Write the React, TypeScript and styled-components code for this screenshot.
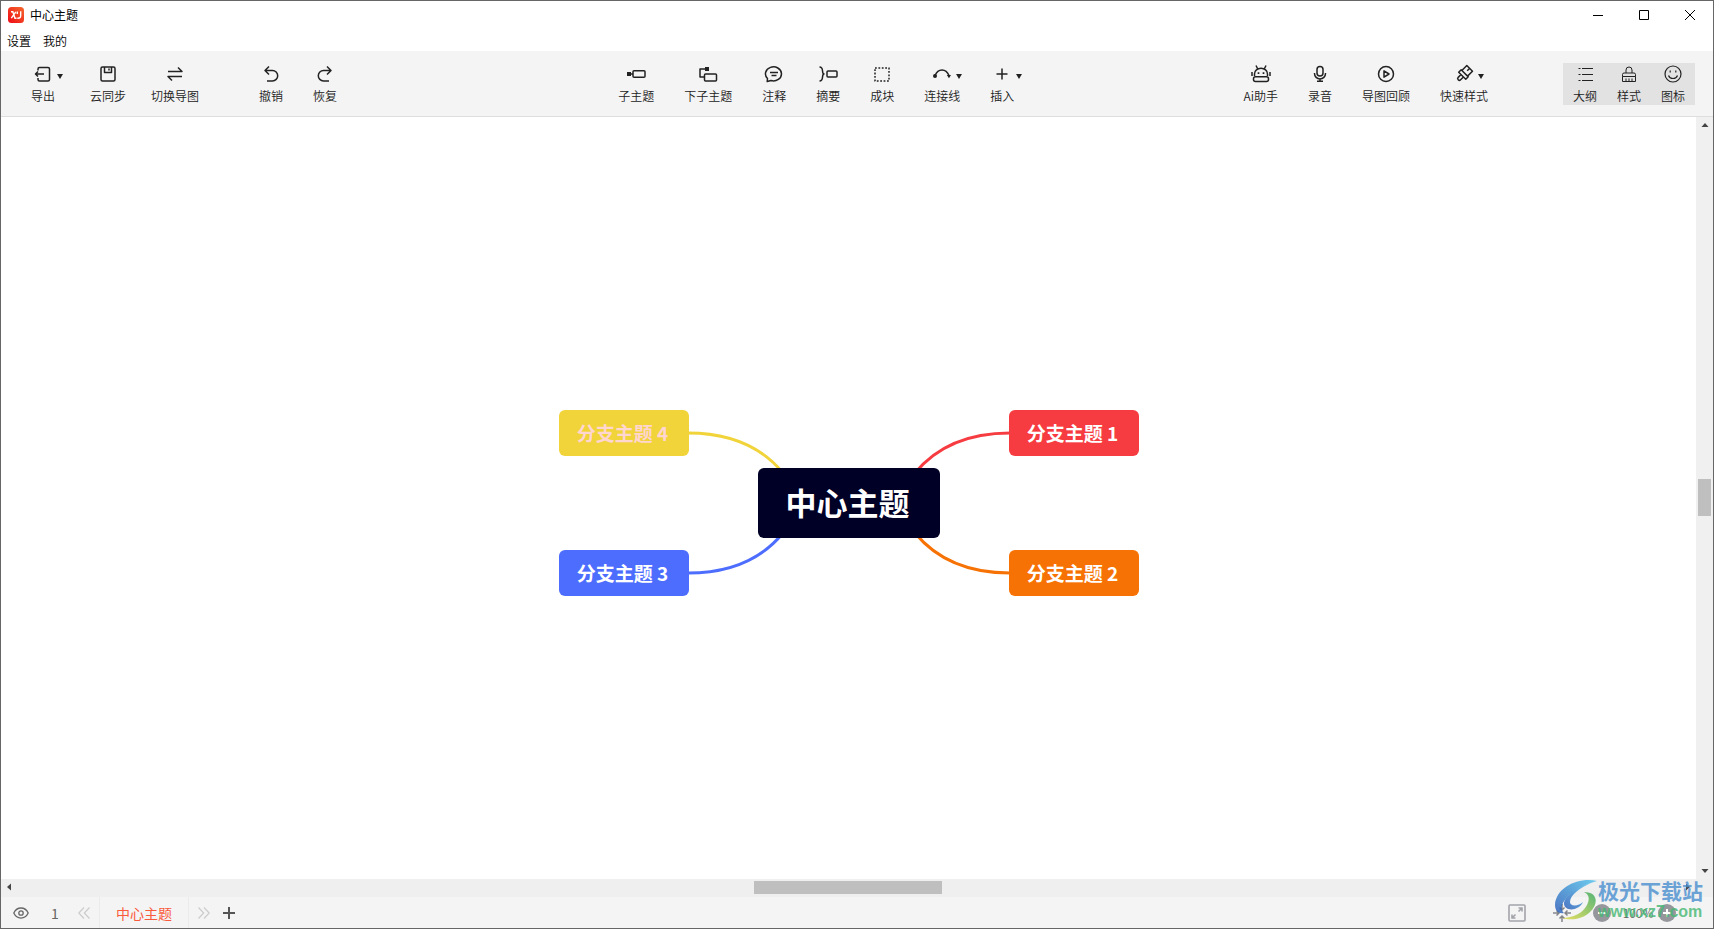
import React from "react";
import styled, { createGlobalStyle } from "styled-components";

const Global = createGlobalStyle`
  * { box-sizing: border-box; }
  body { margin: 0; background: #fff; }
  body, button { font-family: "Noto Sans CJK SC", sans-serif; }
  button { border: 0; padding: 0; margin: 0; background: none; color: inherit; }
`;

const Window = styled.div`
  min-height: 100vh;
  display: flex;
  flex-direction: column;
  border: 1px solid #666;
  color: #333;
  font-size: 12px;
  line-height: 18px;
`;

const TitleBar = styled.header`
  display: flex;
  align-items: center;
  justify-content: space-between;
  height: 28px;
  padding-left: 7px;
`;

const AppTitle = styled.h1`
  display: flex;
  align-items: center;
  gap: 6px;
  margin: 0;
  color: #000;
  font-size: 12px;
  font-weight: 400;
`;

const WindowControls = styled.div`
  display: flex;
`;

const WindowButton = styled.button`
  display: flex;
  align-items: center;
  justify-content: center;
  width: 46px;
  height: 28px;
`;

const MenuBar = styled.nav`
  display: flex;
  gap: 12px;
  height: 22px;
  padding: 3px 6px 1px;
`;

const MenuButton = styled.button`
  font-size: 12px;
  font-weight: 350;
  line-height: 18px;
  color: #000;
`;

const ToolBar = styled.div`
  display: flex;
  justify-content: space-between;
  align-items: center;
  height: 66px;
  padding: 0 18px 0 30px;
  background: #f4f4f4;
  border-bottom: 1px solid #dedede;
`;

const ToolGroup = styled.div<{ $reserve?: boolean }>`
  display: flex;
  gap: 30px;
  min-width: ${(p) => (p.$reserve ? "358px" : "0")};
`;

const ToolCluster = styled.div<{ $gap: number }>`
  display: flex;
  gap: ${(p) => p.$gap}px;
`;

const ToolButton = styled.button`
  display: flex;
  flex-direction: column;
  align-items: center;
  height: 42px;
  padding: 1px 0 0;
  font-size: 12px;
  font-weight: 350;
  line-height: 18px;
  color: #222;
  white-space: nowrap;
`;

const IconBox = styled.span`
  position: relative;
  display: block;
  height: 23px;
  svg { display: block; }
`;

const Caret = styled.span`
  position: absolute;
  left: 24px;
  top: 10px;
  border: 3px solid transparent;
  border-top: 5px solid #222;
  border-bottom: 0;
`;

const PanelSwitch = styled.div`
  display: flex;
  margin-left: 45px;
  background: #e2e2e2;
`;

const PanelButton = styled(ToolButton)`
  width: 44px;
`;

const Workspace = styled.main`
  flex: 1;
  display: grid;
  grid-template-columns: 1fr 17px;
  grid-template-rows: 1fr 18px;
  background: #efefef;
`;

const Canvas = styled.section`
  display: flex;
  align-items: center;
  justify-content: center;
  padding-top: 10px;
  background: #fff;
  overflow: hidden;
`;

const Stage = styled.div`
  position: relative;
  width: 580px;
  height: 186px;
`;

const Links = styled.svg`
  position: absolute;
  inset: 0;
`;

const Topic = styled.div<{ $x: number; $y: number; $bg: string; $ink?: string }>`
  position: absolute;
  left: ${(p) => p.$x}px;
  top: ${(p) => p.$y}px;
  width: 130px;
  height: 46px;
  padding-right: 2px;
  border-radius: 6px;
  background: ${(p) => p.$bg};
  color: ${(p) => p.$ink ?? "#fff"};
  font-size: 19px;
  font-weight: 700;
  line-height: 46px;
  text-align: center;
  white-space: nowrap;
`;

const CentralTopic = styled(Topic)`
  width: 182px;
  height: 70px;
  font-size: 31px;
  line-height: 68px;
`;

const VerticalBar = styled.div`
  display: flex;
  flex-direction: column;
  align-items: center;
  background: #f0f0f0;
`;

const HorizontalBar = styled.div`
  display: flex;
  align-items: center;
  padding-bottom: 2px;
  background: #efefef;
`;

const ScrollButton = styled.button`
  display: flex;
  align-items: center;
  justify-content: center;
  width: 16px;
  height: 16px;
`;

const Track = styled.div<{ $vertical?: boolean }>`
  flex: 1;
  display: flex;
  flex-direction: ${(p) => (p.$vertical ? "column" : "row")};
  justify-content: center;
  align-items: center;
  padding: ${(p) => (p.$vertical ? "0 0 2px" : "0 2px 0 0")};
`;

const Thumb = styled.div<{ $vertical?: boolean }>`
  width: ${(p) => (p.$vertical ? "13px" : "188px")};
  height: ${(p) => (p.$vertical ? "37px" : "13px")};
  background: #bfbfbf;
`;

const StatusBar = styled.footer`
  position: relative;
  display: flex;
  justify-content: space-between;
  height: 31px;
  background: #f4f4f4;
  color: #666;
`;

const StatusGroup = styled.div<{ $end?: boolean }>`
  display: flex;
  align-items: center;
  padding-right: ${(p) => (p.$end ? "36px" : "0")};
`;

const StatusButton = styled.button<{ $w: number }>`
  display: flex;
  align-items: center;
  justify-content: center;
  width: ${(p) => p.$w}px;
  height: 31px;
`;

const PageCount = styled.span`
  width: 28px;
  text-align: center;
  font-size: 14px;
`;

const SheetTab = styled.button`
  height: 31px;
  padding: 0 16px;
  border-left: 1px solid #ebebeb;
  border-right: 1px solid #ebebeb;
  color: #fa5a3c;
  font-size: 14px;
  line-height: 30px;
`;

const Zoom = styled.span`
  width: 38px;
  text-align: center;
  font-size: 12px;
  font-weight: 350;
`;

const Watermark = styled.div`
  position: absolute;
  right: 10px;
  bottom: 6px;
  display: flex;
  align-items: center;
  opacity: 0.8;
  pointer-events: none;
`;

const WatermarkText = styled.div`
  display: flex;
  flex-direction: column;
  font-size: 21px;
  font-weight: 700;
  line-height: 24px;
  color: #4a90d0;
`;

const WatermarkSite = styled.span`
  font-family: "Liberation Sans", sans-serif;
  font-size: 16px;
  font-weight: 700;
  line-height: 20px;
  color: #45b872;
`;

const icons: Record<string, React.ReactNode> = {
  export: <><path d="M5 6.5V5A1.5 1.5 0 0 1 6.500 3.500H15A1.500 1.500 0 0 1 16.500 5V15.500A1.500 1.500 0 0 1 15 17H6.500A1.500 1.500 0 0 1 5 15.500V14" /><path d="M2.500 10H11M5 7.500 2.500 10l2.500 2.500" /></>,
  save: <><rect x="3" y="3" width="14" height="14" rx="1.500" /><path d="M6.500 3v5.500h7V3M11 4.500v2" /></>,
  swap: <path d="M3 7.500h14l-4-4M17 12.500H3l4 4" />,
  undo: <path d="M8 2.500 4 6.500l4 4M4 6.500h7.500a5.200 5.200 0 0 1 0 10.400H6" />,
  redo: <path d="m12 2.500 4 4-4 4M16 6.500H8.500a5.200 5.200 0 0 0 0 10.400H14" />,
  child: <><path d="M4 10h3" /><rect x="1" y="8" width="4" height="4" fill="currentColor" stroke="none" /><rect x="7" y="6.700" width="12" height="6.600" rx="1" /></>,
  sub: <><path d="M9 5H2v8H6" /><rect x="7" y="3" width="4" height="4" fill="currentColor" stroke="none" /><rect x="6.500" y="10" width="12" height="7" rx="1" fill="#f4f4f4" /></>,
  note: <><path d="M3.500 14.500A8 7 0 1 1 7 16.500L3.200 17.500z" /><path d="M6 8.400h8M7.500 11.500h5" /></>,
  summary: <><path d="M1.500 3c5 0 1.500 6.500 4.500 7-3 .5.5 7-4.500 7" /><rect x="9" y="7" width="10" height="6" rx="1" /></>,
  block: <path d="M3 4h14v13H3z" strokeDasharray="1.800 1.600" />,
  link: <><path d="M3 11.500C6 4 14 4 17 11.500" /><circle cx="3" cy="12" r="2" fill="currentColor" stroke="none" /><path d="M14.800 11h4.200l-2 3.200z" fill="currentColor" stroke="none" /></>,
  plus: <path d="M10 4.500v11M4.500 10h11" />,
  robot: <><path d="M3.500 12V10a6.500 5.800 0 0 1 13 0v2M5 1.500l1.500 3M15 1.500l-1.500 3M1 8v4M19 8v4" /><rect x="2.500" y="12.800" width="15" height="4.700" rx="2" /><path d="M7.500 8.200v1.800M12.500 8.200v1.800" strokeWidth="1.700" /></>,
  mic: <><rect x="7" y="2.500" width="6" height="9.500" rx="3" /><path d="M4.500 9v.5a5.500 5.500 0 0 0 11 0V9M10 15v2.500M7 17.300h6" /></>,
  play: <><circle cx="10" cy="10" r="7.500" /><path d="M8 6.800v6.400l5-3.200z" /></>,
  brush: <g transform="rotate(45 10 10)"><path d="M7 2h7v7H6V2zM5 9h10v3.500H5zM8.300 12.500v4a1.700 1.700 0 0 0 3.400 0v-4M10 2.500v3" /></g>,
  list: <g strokeWidth="1"><path d="M7 4.500h11M7 10.500h11M7 16.500h11M3.500 4.500h2M3.500 10.500h2M3.500 16.500h2" /></g>,
  broom: <g strokeWidth="1"><path d="M7 9V6a3 3 0 0 1 6 0v3M3.500 12.500V10.500A1.500 1.500 0 0 1 5 9h10a1.500 1.500 0 0 1 1.500 1.500v2zM3.500 12.500v5h13v-5M7 14.500v3M10 14.500v3M13 14.500v3" /></g>,
  smile: <g strokeWidth="1.200"><circle cx="10" cy="10" r="8" /><path d="M5.500 11.500c1.500 4 7.500 4 9 0M7.200 6.500v2M12.800 6.500v2" /></g>,
};

const Icon = ({ name }: { name: string }) => (
  <svg width="20" height="20" viewBox="0 0 20 20" fill="none" stroke="currentColor" strokeWidth="1.500" strokeLinejoin="round" aria-hidden="true">
    {icons[name]}
  </svg>
);

const Tool = ({ icon, label, menu }: { icon: string; label: string; menu?: boolean }) => (
  <ToolButton type="button">
    <IconBox><Icon name={icon} />{menu && <Caret />}</IconBox>
    {label}
  </ToolButton>
);

const Arrow = ({ turn }: { turn: number }) => (
  <svg width="8" height="8" viewBox="0 0 8 8" aria-hidden="true">
    <path d="M.5 6 4 2l3.500 4z" fill="#444" transform={`rotate(${turn} 4 4)`} />
  </svg>
);

const glyph = { fill: "none", stroke: "currentColor", "aria-hidden": true } as const;

export default function App() {
  return (
    <Window>
      <Global />
      <TitleBar>
        <AppTitle>
          <svg width="16" height="16" viewBox="0 0 16 16" aria-hidden="true">
            <defs><linearGradient id="brand" x1="1" y1="0" x2="0" y2="1"><stop offset="0" stopColor="#f4682c" /><stop offset="1" stopColor="#f00a16" /></linearGradient></defs>
            <rect width="16" height="16" rx="3.500" fill="url(#brand)" />
            <path d="M3 4.800h1.800L7 11.200H8.500M7.800 4.800 3.300 11.200M9.300 4.500v2.500M9.300 11.200c3 .2 3.400-1 3.400-3V4.200" fill="none" stroke="#fff" strokeWidth="1.400" />
          </svg>
          中心主题
        </AppTitle>
        <WindowControls>
          <WindowButton type="button" aria-label="最小化"><svg width="10" height="10" {...glyph} stroke="#000"><path d="M0 5.500h10" /></svg></WindowButton>
          <WindowButton type="button" aria-label="最大化"><svg width="10" height="10" {...glyph} stroke="#000"><path d="M.5.500h9v9h-9z" /></svg></WindowButton>
          <WindowButton type="button" aria-label="关闭"><svg width="10" height="10" {...glyph} stroke="#000"><path d="m0 0 10 10M10 0 0 10" /></svg></WindowButton>
        </WindowControls>
      </TitleBar>
      <MenuBar>
        <MenuButton type="button">设置</MenuButton>
        <MenuButton type="button">我的</MenuButton>
      </MenuBar>
      <ToolBar role="toolbar">
        <ToolGroup $reserve>
          <ToolCluster $gap={35}>
            <Tool icon="export" label="导出" menu />
            <ToolCluster $gap={25}>
              <Tool icon="save" label="云同步" />
              <Tool icon="swap" label="切换导图" />
            </ToolCluster>
          </ToolCluster>
          <ToolCluster $gap={30}>
            <span />
            <Tool icon="undo" label="撤销" />
            <Tool icon="redo" label="恢复" />
          </ToolCluster>
        </ToolGroup>
        <ToolGroup>
          <Tool icon="child" label="子主题" />
          <Tool icon="sub" label="下子主题" />
          <Tool icon="note" label="注释" />
          <Tool icon="summary" label="摘要" />
          <Tool icon="block" label="成块" />
          <Tool icon="link" label="连接线" menu />
          <Tool icon="plus" label="插入" menu />
        </ToolGroup>
        <ToolGroup>
          <Tool icon="robot" label="Ai助手" />
          <Tool icon="mic" label="录音" />
          <Tool icon="play" label="导图回顾" />
          <Tool icon="brush" label="快速样式" menu />
          <PanelSwitch>
            <PanelButton type="button"><IconBox><Icon name="list" /></IconBox>大纲</PanelButton>
            <PanelButton type="button"><IconBox><Icon name="broom" /></IconBox>样式</PanelButton>
            <PanelButton type="button"><IconBox><Icon name="smile" /></IconBox>图标</PanelButton>
          </PanelSwitch>
        </ToolGroup>
      </ToolBar>
      <Workspace>
        <Canvas>
          <Stage>
            <Links width="580" height="186" fill="none" strokeWidth="3" aria-hidden="true">
              <path d="M129 23C167 23 201 35 224 63" stroke="#f1d33a" />
              <path d="M451 23C413 23 379 35 356 63" stroke="#f63b41" />
              <path d="M129 163C167 163 201 151 224 123" stroke="#4d6dff" />
              <path d="M451 163C413 163 379 151 356 123" stroke="#f77204" />
            </Links>
            <Topic $x={0} $y={0} $bg="#f1d33a" $ink="#ffd6d0">分支主题 4</Topic>
            <Topic $x={450} $y={0} $bg="#f63b41">分支主题 1</Topic>
            <Topic $x={0} $y={140} $bg="#4d6dff">分支主题 3</Topic>
            <Topic $x={450} $y={140} $bg="#f77204">分支主题 2</Topic>
            <CentralTopic $x={199} $y={58} $bg="#000027">中心主题</CentralTopic>
          </Stage>
        </Canvas>
        <VerticalBar>
          <ScrollButton type="button" aria-label="向上滚动"><Arrow turn={0} /></ScrollButton>
          <Track $vertical><Thumb $vertical /></Track>
          <ScrollButton type="button" aria-label="向下滚动"><Arrow turn={180} /></ScrollButton>
        </VerticalBar>
        <HorizontalBar>
          <ScrollButton type="button" aria-label="向左滚动"><Arrow turn={-90} /></ScrollButton>
          <Track><Thumb /></Track>
          <ScrollButton type="button" aria-label="向右滚动"><Arrow turn={90} /></ScrollButton>
        </HorizontalBar>
      </Workspace>
      <StatusBar>
        <StatusGroup>
          <StatusButton type="button" $w={40} aria-label="预览">
            <svg width="16" height="12" viewBox="0 0 16 12" {...glyph} strokeWidth="1.300"><path d="M.8 6C4-.7 12-.7 15.200 6 12 12.700 4 12.700.8 6z" /><circle cx="8" cy="6" r="2.200" /></svg>
          </StatusButton>
          <PageCount>1</PageCount>
          <StatusButton type="button" $w={30} aria-label="上一页">
            <svg width="12" height="12" {...glyph} stroke="#ccc" strokeWidth="1.200"><path d="M6 .5.800 6 6 11.500M11.500.500 6.300 6l5.200 5.500" /></svg>
          </StatusButton>
          <SheetTab type="button">中心主题</SheetTab>
          <StatusButton type="button" $w={30} aria-label="下一页">
            <svg width="12" height="12" {...glyph} stroke="#ccc" strokeWidth="1.200"><path d="M.5.500 5.700 6 .5 11.500M6 .5 11.200 6 6 11.500" /></svg>
          </StatusButton>
          <StatusButton type="button" $w={20} aria-label="新建画布">
            <svg width="12" height="12" {...glyph} stroke="#555" strokeWidth="2"><path d="M6 0v12M0 6h12" /></svg>
          </StatusButton>
        </StatusGroup>
        <StatusGroup $end>
          <StatusButton type="button" $w={45} aria-label="全屏">
            <svg width="18" height="18" {...glyph} stroke="#a3a4aa" strokeWidth="1.600"><rect x="1" y="1" width="16" height="16" rx="1" /><path d="M10.500 7.500 14 4M10.500 4H14v3.500M7.500 10.500 4 14M4 10.500V14h3.500" /></svg>
          </StatusButton>
          <StatusButton type="button" $w={45} aria-label="居中">
            <svg width="18" height="18" {...glyph} stroke="#85868c" strokeWidth="1.500"><path d="M9 0v6M9 18v-6M0 9h6M18 9h-6M6.500 3.500 9 6l2.500-2.500M6.500 14.500 9 12l2.500 2.500M3.500 6.500 6 9l-2.500 2.500M14.500 6.500 12 9l2.500 2.500" /></svg>
          </StatusButton>
          <StatusButton type="button" $w={35} aria-label="缩小">
            <svg width="18" height="18" {...glyph} stroke="#fff" strokeWidth="2"><circle cx="9" cy="9" r="9" fill="#96979d" stroke="none" /><path d="M5 9h8" /></svg>
          </StatusButton>
          <Zoom>100%</Zoom>
          <StatusButton type="button" $w={20} aria-label="放大">
            <svg width="18" height="18" {...glyph} stroke="#fff" strokeWidth="2"><circle cx="9" cy="9" r="9" fill="#96979d" stroke="none" /><path d="M5 9h8M9 5v8" /></svg>
          </StatusButton>
        </StatusGroup>
        <Watermark>
          <svg width="43" height="42" viewBox="0 0 43 42" aria-hidden="true">
            <defs>
              <linearGradient id="sky" x1="0" y1="1" x2="1" y2="0"><stop offset="0" stopColor="#2458b8" /><stop offset="1" stopColor="#4cc3ee" /></linearGradient>
              <linearGradient id="leaf" x1="0" y1="1" x2="1" y2="0"><stop offset="0" stopColor="#e8dc3c" /><stop offset="1" stopColor="#2fa65a" /></linearGradient>
            </defs>
            <path d="M42 2C24-2 1 8 0 26c0 6 4 9 9 8C1 27 15 9 42 2z" fill="url(#sky)" />
            <path d="M36 4C22 8 9 17 9 25c1 8 15 7 19-2-4 4-13 5-13 0 0-7 10-14 21-19z" fill="url(#sky)" />
            <path d="M29 13c15 0 14 13 6 20-7 7-19 9-28 6 11 0 21-5 25-13 3-6 2-11-3-13z" fill="url(#leaf)" />
          </svg>
          <WatermarkText>极光下载站<WatermarkSite>www.xz7.com</WatermarkSite></WatermarkText>
        </Watermark>
      </StatusBar>
    </Window>
  );
}
